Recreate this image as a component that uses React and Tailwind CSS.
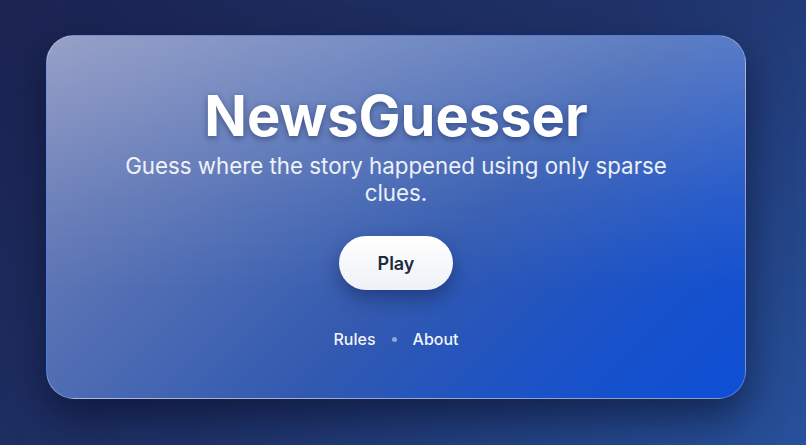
export default function App() {
  return (
    <div
      className="w-[806px] h-[445px] overflow-hidden bg-[linear-gradient(135deg,#1b2350_0%,#1f3268_50%,#27519b_100%)] pl-[46px] pt-[35px]"
      style={{ fontFamily: "Inter, 'Noto Sans', sans-serif" }}
    >
      <div className="relative w-[700px] h-[364px] rounded-[28px] border border-white/25 overflow-hidden shadow-[0_18px_40px_rgba(5,10,35,0.55)] bg-[linear-gradient(180deg,rgba(255,255,255,0.22)_0%,rgba(255,255,255,0.06)_45%,rgba(255,255,255,0)_70%),linear-gradient(135deg,#7a86b8_0%,#5470b4_30%,#3159b0_58%,#1a52c8_80%,#0d4fd6_100%)]">
        <div className="flex flex-col items-center pt-[48px]">
          <h1 className="text-[56px] leading-[64px] font-bold text-white [text-shadow:0_2px_6px_rgba(10,20,60,0.45)]">
            NewsGuesser
          </h1>
          <p className="mt-[4px] w-[580px] text-center text-[22.3px] leading-[27px] text-white/90">
            Guess where the story happened using only sparse clues.
          </p>
          <button className="mt-[30px] w-[114px] h-[54px] rounded-full bg-[linear-gradient(180deg,#ffffff,#eef1f7)] text-[18px] font-semibold text-[#1e293b] shadow-[0_8px_18px_rgba(10,20,60,0.4)]">
            Play
          </button>
          <div className="mt-[37px] flex items-center gap-[16px] text-[16px] leading-[24px] font-medium text-white/95">
            <span>Rules</span>
            <span className="w-[5px] h-[5px] rounded-full bg-[#8fa6dc]"></span>
            <span>About</span>
          </div>
        </div>
      </div>
    </div>
  );
}
